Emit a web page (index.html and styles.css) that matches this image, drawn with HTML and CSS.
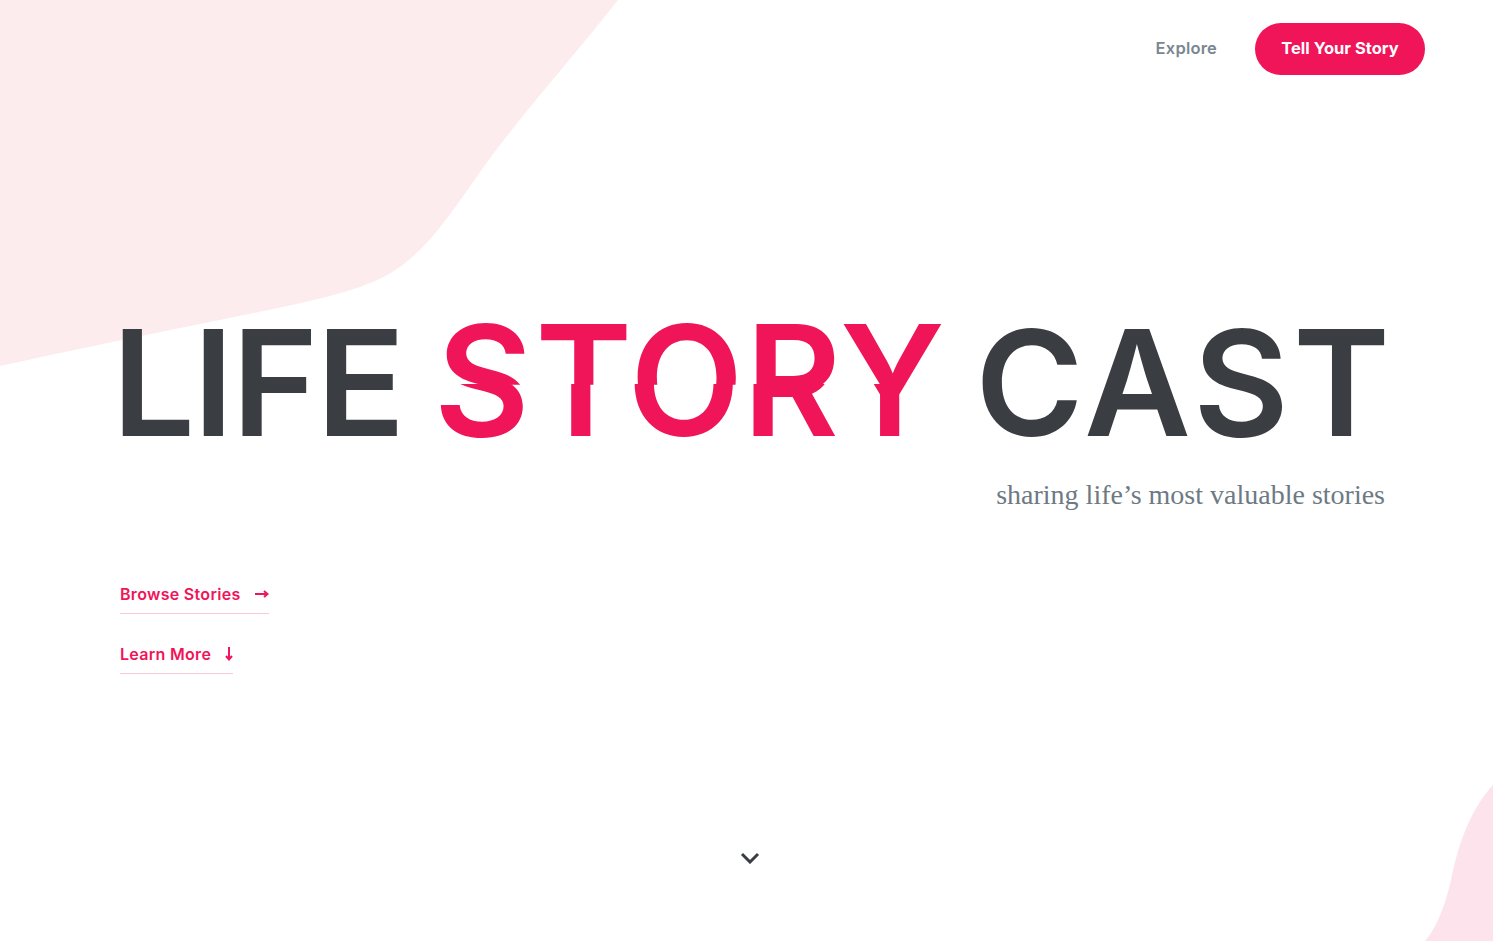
FILE: index.html
```html
<!DOCTYPE html>
<html lang="en">
<head>
<meta charset="utf-8">
<title>Life Story Cast</title>
<link rel="stylesheet" href="styles.css">
</head>
<body>
<div class="page">
  <svg class="blob blob-tl" width="620" height="370" viewBox="0 0 620 370" aria-hidden="true">
    <path d="M0 0 H618 C575 55 525 110 485 165 C445 222 418 265 370 283 C325 302 250 312 0 366 Z" fill="#fdeced"/>
  </svg>
  <svg class="blob blob-br" width="68" height="156" viewBox="0 0 68 156" aria-hidden="true">
    <path d="M68 0 C45 25 33 60 26 95 C19 125 10 145 0 156 H68 Z" fill="#fde4ec"/>
  </svg>

  <header class="nav">
    <a class="nav-link" href="#">Explore</a>
    <a class="nav-btn" href="#">Tell Your Story</a>
  </header>

  <main class="hero">
    <h1 class="title">
      <span class="word word-life">LIFE</span>
      <span class="word accent glitch" data-text="STORY"><span class="glitch-base">STORY</span></span>
      <span class="word word-cast">CAST</span>
    </h1>
    <p class="tagline">sharing life’s most valuable stories</p>

    <div class="links">
      <a class="cta" href="#">Browse Stories
        <svg class="cta-icon" width="14" height="10" viewBox="0 0 14 10"><path d="M0 5 H12 M9 2 L12.5 5 L9 8" fill="none" stroke="currentColor" stroke-width="2"/></svg>
      </a>
      <a class="cta" href="#">Learn More
        <svg class="cta-icon" width="8" height="16" viewBox="0 0 8 16"><path d="M4 1 V13 M1 10 L4 13.5 L7 10" fill="none" stroke="currentColor" stroke-width="2"/></svg>
      </a>
    </div>
  </main>

  <div class="scroll">
    <svg width="20" height="12" viewBox="0 0 20 12"><path d="M2 2 L10 10 L18 2" fill="none" stroke="#3a3e44" stroke-width="3"/></svg>
  </div>
</div>
</body>
</html>
```
FILE: styles.css
```css
* { box-sizing: border-box; }
html, body { margin: 0; padding: 0; background: #fff; }
body { font-family: Inter, "Noto Sans", sans-serif; color: #3a3d42; }
a { text-decoration: none; }

.page {
  position: relative;
  width: 1493px;
  height: 941px;
  overflow: hidden;
}

.blob { position: absolute; z-index: 0; }
.blob-tl { left: 0; top: 0; }
.blob-br { right: 0; bottom: 0; }

.nav {
  position: relative;
  z-index: 1;
  display: flex;
  justify-content: flex-end;
  align-items: center;
  gap: 38px;
  padding: 23px 68px 0 0;
}
.nav-link {
  font-size: 16.5px;
  font-weight: 600;
  letter-spacing: 0.2px;
  color: #7b8790;
  margin-top: -3px;
}
.nav-btn {
  display: flex;
  align-items: center;
  justify-content: center;
  width: 170px;
  height: 52px;
  padding-bottom: 3px;
  border-radius: 26px;
  background: #f01459;
  color: #fff;
  font-size: 16.5px;
  font-weight: 700;
}

.hero {
  position: relative;
  z-index: 1;
  padding: 0 108px 0 120px;
}

.title {
  margin: 234px -9px 0 -8px;
  display: flex;
  justify-content: space-between;
  font-size: 147px;
  font-weight: 600;
  line-height: 1;
  color: #3a3d42;
  white-space: nowrap;
}
.word-life { letter-spacing: -2px; }
.glitch { letter-spacing: 2.5px; }
.word-cast { letter-spacing: 4px; }
.accent { color: #f01459; }

.glitch { position: relative; display: inline-block; }
.glitch-base { display: inline-block; clip-path: inset(51% 0 0 0); }
.glitch::before {
  content: attr(data-text);
  position: absolute;
  left: 0;
  top: 0;
  transform: translate(3px, -5px);
  clip-path: inset(0 0 45% 0);
}

.tagline {
  margin: 23px 0 0;
  text-align: right;
  font-family: "Liberation Serif", "DejaVu Serif", serif;
  font-size: 28px;
  color: #6d7a84;
}

.links {
  margin-top: 73px;
  display: flex;
  flex-direction: column;
  align-items: flex-start;
  gap: 30px;
}
.cta {
  display: flex;
  align-items: center;
  gap: 14px;
  padding-bottom: 9px;
  border-bottom: 1px solid #f9c9d8;
  font-size: 16px;
  font-weight: 600;
  letter-spacing: 0.3px;
  color: #f01459;
}
.cta-icon { display: block; }

.scroll {
  position: absolute;
  left: 6px;
  right: 0;
  top: 852px;
  display: flex;
  justify-content: center;
  z-index: 1;
}
```
